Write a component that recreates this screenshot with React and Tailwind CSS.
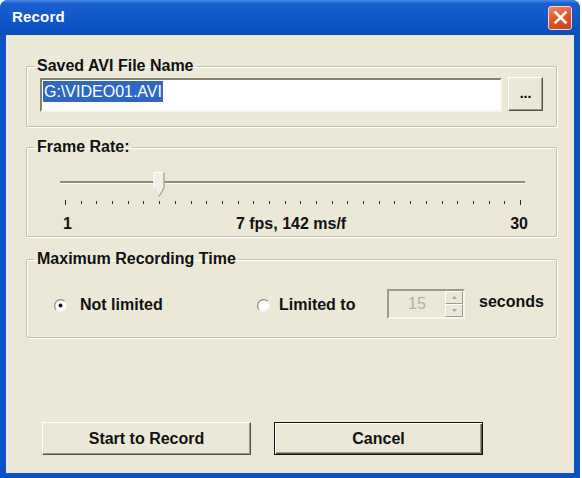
import React, { useState } from 'react';

const font = { fontFamily: '"Liberation Sans", Arial, sans-serif' };

// 30 tick marks for the frame-rate trackbar (1..30 fps)
const TICKS = Array.from({ length: 30 }, (_, i) => 38 + (i * 455) / 29);

const Radio = ({ checked, onClick }) => (
  <svg width="13" height="13" viewBox="0 0 13 13" onClick={onClick} className="shrink-0">
    <circle cx="6.5" cy="6.5" r="6" fill="#fff" />
    <path d="M2.26 10.74 A6 6 0 0 1 10.74 2.26" stroke="#8d8a7b" strokeWidth="1.2" fill="none" />
    <path d="M10.74 2.26 A6 6 0 0 1 2.26 10.74" stroke="#f6f5ef" strokeWidth="1.2" fill="none" />
    {checked && <circle cx="6.5" cy="6.5" r="2" fill="#111" />}
  </svg>
);

const GroupBox = ({ title, className, children }) => (
  <fieldset
    className={`border border-[#c3c0b0] rounded-[2px] shadow-[inset_1px_1px_0_#fff,1px_1px_0_#fff] ${className}`}
  >
    <legend className="ml-[7px] px-[3px] text-[16px] leading-[18px] font-bold text-[#111]">{title}</legend>
    {children}
  </fieldset>
);

const Trackbar = ({ value }) => {
  const cx = TICKS[value - 1];
  return (
    <svg width="529" height="40" viewBox="0 0 529 40" className="block">
      <rect x="33" y="15" width="465" height="2" fill="#8f8c7e" />
      <rect x="33" y="17" width="465" height="1" fill="#fbfaf5" />
      {TICKS.map((x, i) => (
        <rect
          key={i}
          x={Math.round(x)}
          y={i === 0 || i === 29 ? 34 : 35}
          width="1"
          height={i === 0 || i === 29 ? 5 : 3}
          fill="#2b2b2b"
        />
      ))}
      <g transform={`translate(${Math.round(cx) - 5.5} 6)`}>
        <path d="M0 0 H11 V16 L5.5 25 L0 16 Z" fill="#f1efe6" />
        <path d="M0.5 16 V0.5 H10.5" stroke="#ffffff" fill="none" />
        <path d="M10.5 0.5 V16 L5.5 24.5" stroke="#8a877a" fill="none" />
        <path d="M0.5 16 L5.5 24.5" stroke="#d9d6c8" fill="none" />
      </g>
    </svg>
  );
};

const Button = ({ children, isDefault, className }) => (
  <button
    className={`h-[33px] w-[209px] bg-[#ebe8d8] text-[16px] font-bold text-[#111] ${
      isDefault
        ? 'border border-[#111] shadow-[inset_1px_1px_0_#fff,inset_-1px_-1px_0_#55534a,inset_-2px_-2px_0_#9c998b]'
        : 'border-t border-l border-t-white border-l-white border-r border-b border-r-[#55534a] border-b-[#55534a] shadow-[inset_-1px_-1px_0_#9c998b]'
    } ${className || ''}`}
  >
    {children}
  </button>
);

export default function App() {
  const [limited, setLimited] = useState(false);

  return (
    <div className="w-[582px] h-[478px] bg-white" style={font}>
      <div className="w-[580px] h-[478px] rounded-t-[8px] bg-[#0d51c4] flex flex-col">
        {/* title bar */}
        <div className="h-[35px] shrink-0 rounded-t-[8px] bg-[linear-gradient(180deg,#4a8ae6_0%,#1a5fce_10%,#0f56c8_60%,#0b4dbd_100%)] flex items-center justify-between pl-[12px] pr-[8px]">
          <span className="text-white text-[15px] font-bold tracking-[0.2px]">Record</span>
          <button className="w-[24px] h-[24px] rounded-[3px] border border-[#f3d6cc] bg-[linear-gradient(160deg,#ef8a62_0%,#e0572f_45%,#c9401a_100%)] flex items-center justify-center">
            <svg width="15" height="15" viewBox="0 0 15 15">
              <path d="M2.5 2.5 L12.5 12.5 M12.5 2.5 L2.5 12.5" stroke="#fff" strokeWidth="2.6" strokeLinecap="square" />
            </svg>
          </button>
        </div>

        {/* dialog body */}
        <div className="flex-1 mx-[6px] mb-[5px] bg-[#ebe8d8] flex flex-col">
          <GroupBox title="Saved AVI File Name" className="mt-[22px] ml-[20px] mr-[17px]">
            <div className="flex items-start gap-[6px] px-[13px] pt-[3px] pb-[14px]">
              <div className="flex-1 h-[34px] bg-white border-2 border-t-[#858273] border-l-[#858273] border-b-[#f7f6f0] border-r-[#f7f6f0] pl-[1px]">
                <span className="inline-block bg-[#2f67c4] text-white text-[16px] leading-[21px] px-[1px]">
                  G:\VIDEO01.AVI
                </span>
              </div>
              <button className="w-[35px] h-[34px] -mt-px bg-[#ebe8d8] border-t border-l border-t-white border-l-white border-r border-b border-r-[#55534a] border-b-[#55534a] shadow-[inset_-1px_-1px_0_#9c998b] text-[14px] font-bold leading-none pb-[2px]">
                ...
              </button>
            </div>
          </GroupBox>

          <GroupBox title="Frame Rate:" className="mt-[11px] ml-[20px] mr-[17px] pt-[10px] pb-[3px]">
            <Trackbar value={7} />
            <div className="mt-[9px] h-[18px] flex justify-between items-center pl-[36px] pr-[28px] text-[16px] leading-[18px] font-bold text-[#111]">
              <span>1</span>
              <span>7 fps, 142 ms/f</span>
              <span>30</span>
            </div>
          </GroupBox>

          <GroupBox title="Maximum Recording Time" className="mt-[13px] ml-[20px] mr-[17px] pt-[21px] pb-[18px]">
            <div className="h-[30px] flex items-center pl-[27px] text-[16px] font-bold text-[#111]">
              <label className="w-[203px] flex items-center gap-[13px] mt-[2px]" onClick={() => setLimited(false)}>
                <Radio checked={!limited} />
                <span>Not limited</span>
              </label>
              <label className="w-[130px] flex items-center gap-[9px] mt-[2px]" onClick={() => setLimited(true)}>
                <Radio checked={limited} />
                <span>Limited to</span>
              </label>
              <div className="w-[78px] h-[30px] flex border-2 border-t-[#9d9a8b] border-l-[#9d9a8b] border-b-[#f7f6f0] border-r-[#f7f6f0]">
                <div className="flex-1 flex items-center justify-center text-[#b3b0a1] font-normal text-[16px]">15</div>
                <div className="w-[18px] flex flex-col">
                  <div className="flex-1 flex items-center justify-center bg-[#ebe8d8] border-t border-l border-t-white border-l-white border-r border-b border-r-[#9d9a8b] border-b-[#9d9a8b]">
                    <svg width="5" height="3" viewBox="0 0 5 3"><path d="M0 3 L2.5 0 L5 3 Z" fill="#aca899" /></svg>
                  </div>
                  <div className="flex-1 flex items-center justify-center bg-[#ebe8d8] border-t border-l border-t-white border-l-white border-r border-b border-r-[#9d9a8b] border-b-[#9d9a8b]">
                    <svg width="5" height="3" viewBox="0 0 5 3"><path d="M0 0 L2.5 3 L5 0 Z" fill="#aca899" /></svg>
                  </div>
                </div>
              </div>
              <span className="ml-[14px] -mt-[4px]">seconds</span>
            </div>
          </GroupBox>

          <div className="mt-auto mb-[18px] ml-[36px] flex gap-[23px]">
            <Button>Start to Record</Button>
            <Button isDefault>Cancel</Button>
          </div>
        </div>
      </div>
    </div>
  );
}
